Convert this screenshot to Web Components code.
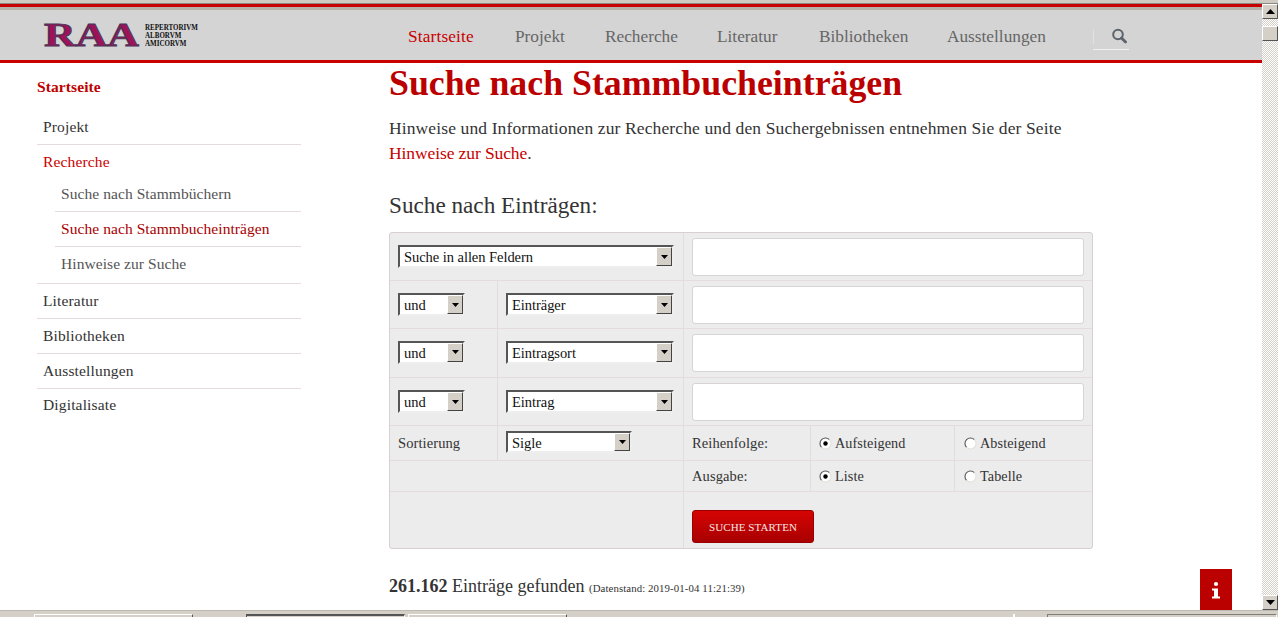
<!DOCTYPE html>
<html lang="de">
<head>
<meta charset="utf-8">
<title>RAA</title>
<style>
html,body{margin:0;height:617px;overflow:hidden;background:#fff;font-family:"Liberation Serif",serif;color:#333}
</style>
</head>
<body>
<raa-app>
  <raa-header slot="header">
    <raa-logo slot="logo"></raa-logo>
    <raa-nav-link current style="--w:107px;letter-spacing:.15px">Startseite</raa-nav-link>
    <raa-nav-link style="--w:90px">Projekt</raa-nav-link>
    <raa-nav-link style="--w:112px">Recherche</raa-nav-link>
    <raa-nav-link style="--w:102px">Literatur</raa-nav-link>
    <raa-nav-link style="--w:128px">Bibliotheken</raa-nav-link>
    <raa-nav-link style="--w:146px">Ausstellungen</raa-nav-link>
  </raa-header>
  <raa-sidebar slot="side">
    <raa-side-head>Startseite</raa-side-head>
    <raa-side-item>Projekt</raa-side-item>
    <raa-side-group>
      <raa-side-item active borderless style="height:32px">Recherche</raa-side-item>
      <raa-side-sub>Suche nach Stammbüchern</raa-side-sub>
      <raa-side-sub current>Suche nach Stammbucheinträgen</raa-side-sub>
      <raa-side-sub borderless>Hinweise zur Suche</raa-side-sub>
    </raa-side-group>
    <raa-side-item>Literatur</raa-side-item>
    <raa-side-item>Bibliotheken</raa-side-item>
    <raa-side-item>Ausstellungen</raa-side-item>
    <raa-side-item borderless style="line-height:32px">Digitalisate</raa-side-item>
  </raa-sidebar>
  <raa-article slot="main">
    <raa-search-form></raa-search-form>
  </raa-article>
  <raa-info slot="info"></raa-info>
</raa-app>
<script>
function def(name, css, html){
  const cls = class extends HTMLElement{
    constructor(){super();this.attachShadow({mode:'open'}).innerHTML='<style>'+css+'</style>'+html;}
  };
  customElements.define(name, cls);
}
const ARROW_BTN = (dir)=>`<svg width="9" height="5" viewBox="0 0 9 5"><path d="${dir==='up'?'M4.5 0 9 5H0z':'M0 0h9L4.5 5z'}" fill="#000"/></svg>`;

def('raa-app',`
:host{display:flex;flex-direction:column;width:1278px;height:617px;position:relative;overflow:hidden;background:#fff}
.top{height:3px;background:#cfcbc3;border-bottom:1px solid #8a8780;flex:none}
.row{display:flex;flex:1;min-height:0}
.page{flex:1;min-width:0;display:flex;flex-direction:column}
.body{display:flex;flex:1;min-height:0;padding-left:37px}
.bottom{flex:none;height:7px}
`,`
<div class="top"></div>
<div class="row">
  <div class="page">
    <slot name="header"></slot>
    <div class="body"><slot name="side"></slot><slot name="main"></slot></div>
  </div>
  <raa-vscroll></raa-vscroll>
</div>
<raa-hstrip class="bottom"></raa-hstrip>
<slot name="info"></slot>
`);

def('raa-vscroll',`
:host{display:flex;flex-direction:column;width:16px;flex:none;
 background-color:#fff;background-image:conic-gradient(#d4d0c8 25%,#fff 0 50%,#d4d0c8 0 75%,#fff 0);background-size:2px 2px}
.btn{box-sizing:border-box;width:16px;height:15px;background:#d4d0c8;border:1px solid;border-color:#fff #555 #555 #fff;display:flex;align-items:center;justify-content:center;flex:none}
.thumb{margin-top:7px;height:15px}
.sp{flex:1}
`,`
<div class="btn">${ARROW_BTN('up')}</div>
<div class="btn thumb"></div>
<div class="sp"></div>
<div class="btn">${ARROW_BTN('down')}</div>
`);

def('raa-hstrip',`
:host{display:flex;box-sizing:border-box;height:7px;background:#d4d0c8;border-top:1px solid #bdb9b0;padding-top:3px;position:relative}
i{display:block;height:3px;box-sizing:border-box;border-top:1px solid #fff;border-left:1px solid #fff;border-right:1px solid #555}
.a{margin-left:34px;width:159px}
.b{margin-left:53px;width:159px;border-top:2px solid #555;border-left-color:#555;border-right-color:#fff}
.c{margin-left:3px;width:159px}
.m{margin-left:446px;width:2px;border:0;background:#fff}
.d{margin-left:32px;width:230px;border-top-color:#807d76;border-left-color:#807d76;border-right-color:#fff}
`,`<i class="a"></i><i class="b"></i><i class="c"></i><i class="m"></i><i class="d"></i>`);

def('raa-header',`
:host{display:block;flex:none;box-sizing:border-box;height:59px;background:#d4d4d4;border-bottom:3px solid #c80000;position:relative}
.cap{height:3px;background:#c80000}
.band{height:3px;background:#b4b2a8}
.in{display:flex;align-items:center;height:50px;padding-left:44px}
nav{display:flex;margin-left:209px;margin-top:4px}
.search{width:36px;height:21px;margin-top:9px;box-sizing:border-box;border-bottom:1px solid #f0f0f0;position:relative}
.search:before{content:"";position:absolute;left:0;top:0;height:15px;width:1px;background:#e2e2e2}
svg.mag{position:absolute;left:18px;top:-1px}
`,`
<div class="cap"></div><div class="band"></div>
<div class="in">
  <slot name="logo"></slot>
  <nav><slot></slot></nav>
  <div class="search"><svg class="mag" width="16" height="16" viewBox="0 0 16 16"><circle cx="7" cy="6.5" r="4.8" fill="none" stroke="#5d636b" stroke-width="2"/><path d="M10.5 10l4 4" stroke="#5d636b" stroke-width="2.8" stroke-linecap="round"/></svg></div>
</div>
`);

def('raa-logo',`
:host{display:flex;width:155px;height:32px;flex:none;font-family:"Liberation Serif",serif}
.mark{display:block;width:95px;flex:none;font-size:34px;line-height:32px;font-weight:700;color:#a01258;-webkit-text-stroke:1px #4a3558;transform:scaleX(1.29);transform-origin:0 50%;white-space:nowrap}
.sub{margin-left:6px;padding-top:5px;font-size:8px;line-height:8px;font-weight:700;color:#111;white-space:nowrap;transform:scaleX(.875);transform-origin:0 50%}
.sub div{display:block}
`,`
<span class="mark">RAA</span>
<div class="sub"><div>REPERTORIVM</div><div>ALBORVM</div><div>AMICORVM</div></div>
`);

def('raa-nav-link',`
:host{display:block;width:var(--w);font-size:17.3px;color:#666;white-space:nowrap;line-height:24px}
:host([current]){color:#c80000}
`,`<slot></slot>`);

def('raa-sidebar',`
:host{display:block;width:264px;flex:none}
`,`<slot></slot>`);

def('raa-side-head',`
:host{display:block;font-weight:700;font-size:15.5px;color:#c00000;line-height:20px;padding-top:14px;height:33px;letter-spacing:.1px}
`,`<slot></slot>`);

def('raa-side-item',`
:host{display:block;box-sizing:border-box;height:35px;line-height:34px;padding-left:6px;font-size:15.5px;color:#333;border-bottom:1px solid #e4dcdc;letter-spacing:.15px}
:host([active]){color:#c80000}
:host([borderless]){border-bottom:0}
`,`<slot></slot>`);

def('raa-side-group',`
:host{display:block;border-bottom:1px solid #e4dcdc;height:139px;box-sizing:border-box}
`,`<slot></slot>`);

def('raa-side-sub',`
:host{display:block;box-sizing:border-box;height:35px;line-height:34px;margin-left:18px;padding-left:6px;font-size:15.5px;color:#555;border-bottom:1px solid #e4dcdc;letter-spacing:.07px;white-space:nowrap}
:host([current]){color:#aa0000}
:host([borderless]){border-bottom:0}
`,`<slot></slot>`);

def('raa-article',`
:host{display:block;margin-left:88px;width:704px;flex:none}
h1{margin:0;font-size:35.8px;line-height:40px;color:#bb0000;font-weight:700;white-space:nowrap}
p{margin:0;font-size:17.5px;line-height:25px;padding-top:13px;letter-spacing:.12px;color:#333}
a{color:#c80000;text-decoration:none;letter-spacing:-.1px}
h2{margin:0;font-weight:400;font-size:23.2px;line-height:28px;padding-top:25px;padding-bottom:13px;color:#333}
.res{display:block;margin-top:26px;font-size:18px;line-height:22px;white-space:nowrap}
.res b{font-weight:700}
.res small{font-size:10.8px;letter-spacing:.1px}
`,`
<h1>Suche nach Stammbucheinträgen</h1>
<p>Hinweise und Informationen zur Recherche und den Suchergebnissen entnehmen Sie der Seite<br><a href="#">Hinweise zur Suche</a>.</p>
<h2>Suche nach Einträgen:</h2>
<slot></slot>
<div class="res"><b>261.162</b> Einträge gefunden <small>(Datenstand: 2019-01-04 11:21:39)</small></div>
`);

def('raa-select',`
:host{display:inline-flex;box-sizing:border-box;height:23px;width:var(--w);background:#fff;border:2px solid;border-color:#555 #eee #eee #555;font-size:14.5px;color:#111;line-height:18px;position:relative;letter-spacing:-.05px}
.v{flex:1;padding:1px 0 0 4px;white-space:nowrap}
.b{box-sizing:border-box;width:16px;background:#d4d0c8;border:1px solid;border-color:#fff #444 #444 #fff;display:flex;align-items:center;justify-content:center}
svg{display:block}
`,`<span class="v"><slot></slot></span><span class="b"><svg width="7" height="4" viewBox="0 0 7 4"><path d="M0 0h7L3.5 4z" fill="#000"/></svg></span>`);

def('raa-text-field',`
:host{display:block;flex:1}
input{display:block;box-sizing:border-box;width:392px;height:38px;background:#fff;border:1px solid #d9d4d4;border-radius:3px;outline:0;padding:0 8px;margin:0;font:inherit}
`,`<input type="text" aria-label="Suchbegriff">`);

def('raa-radio',`
:host{display:flex;align-items:center;gap:3px;font-size:14.2px;color:#333;white-space:nowrap}
svg{display:block;flex:none}
`,`<svg width="13" height="13" viewBox="0 0 13 13"><circle cx="6.5" cy="6.5" r="5.5" fill="#fff"/><path d="M2.6 10.4A5.5 5.5 0 0 1 10.4 2.6" fill="none" stroke="#555" stroke-width="1.1"/><path d="M10.4 2.6A5.5 5.5 0 0 1 2.6 10.4" fill="none" stroke="#e4e0d8" stroke-width="1.1"/><circle class="d" cx="6.5" cy="6.5" r="2.2" fill="var(--dot,transparent)"/></svg><slot></slot>`);

def('raa-button',`
:host{display:inline-flex;align-items:center;justify-content:center;box-sizing:border-box;width:122px;height:33px;border-radius:3px;border:1px solid #9a0000;background:linear-gradient(#d60404,#a80000);color:#f6e6e6;font-size:11px;letter-spacing:.1px;white-space:nowrap}
`,`<slot></slot>`);

def('raa-info',`
:host{position:absolute;left:1200px;top:569px;width:32px;height:41px;background:#bb0000;display:block}
svg{display:block}
`,`<svg width="32" height="41" viewBox="0 0 32 41"><circle cx="16" cy="15" r="2.1" fill="#fff"/><path d="M12 19.5h6v8h2v2h-8v-2h2v-6h-2z" fill="#fff"/></svg>`);

def('raa-search-form',`
:host{display:block;box-sizing:border-box;width:704px;background:#ececec;border:1px solid #d8d0d0;border-radius:3px;font-size:14.5px;color:#333}
.g{display:grid;grid-template-columns:108px 186px 127px 144px 137px;grid-template-rows:48px 48px 49px 48px 35px 31px 56px}
.c{box-sizing:border-box;display:flex;align-items:center;padding:0 8px;border-right:1px solid #e4dcdc;border-bottom:1px solid #e4dcdc;letter-spacing:.1px;white-space:nowrap}
.e{border-right:0}.l{border-bottom:0}
.s2{grid-column:span 2}.s3{grid-column:span 3}
.btn{align-items:flex-start;padding-top:18px}
.r{padding-left:9px}
.up{padding-bottom:2px}
`,`
<div class="g">
  <div class="c s2"><raa-select style="--w:276px">Suche in allen Feldern</raa-select></div>
  <div class="c s3 e"><raa-text-field></raa-text-field></div>

  <div class="c"><raa-select style="--w:67px">und</raa-select></div>
  <div class="c"><raa-select style="--w:168px">Einträger</raa-select></div>
  <div class="c s3 e"><raa-text-field></raa-text-field></div>

  <div class="c up"><raa-select style="--w:67px">und</raa-select></div>
  <div class="c up"><raa-select style="--w:168px">Eintragsort</raa-select></div>
  <div class="c s3 e"><raa-text-field></raa-text-field></div>

  <div class="c"><raa-select style="--w:67px">und</raa-select></div>
  <div class="c"><raa-select style="--w:168px">Eintrag</raa-select></div>
  <div class="c s3 e"><raa-text-field></raa-text-field></div>

  <div class="c">Sortierung</div>
  <div class="c up"><raa-select style="--w:126px;height:22px">Sigle</raa-select></div>
  <div class="c">Reihenfolge:</div>
  <div class="c"><raa-radio style="--dot:#000">Aufsteigend</raa-radio></div>
  <div class="c e r"><raa-radio>Absteigend</raa-radio></div>

  <div class="c s2"></div>
  <div class="c">Ausgabe:</div>
  <div class="c"><raa-radio style="--dot:#000">Liste</raa-radio></div>
  <div class="c e r"><raa-radio>Tabelle</raa-radio></div>

  <div class="c s2 l"></div>
  <div class="c s3 e l btn"><raa-button>SUCHE STARTEN</raa-button></div>
</div>
`);
</script>
</body>
</html>
